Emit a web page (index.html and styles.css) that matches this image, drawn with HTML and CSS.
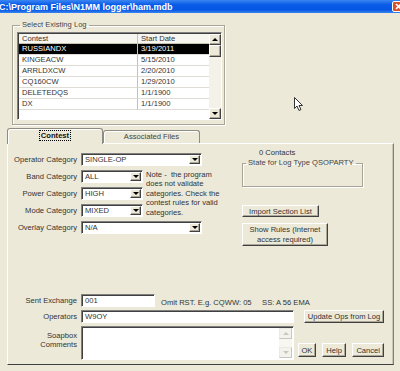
FILE: index.html
```html
<!DOCTYPE html>
<html>
  <head>
    <meta charset="UTF-8" />
    <link rel="stylesheet" href="styles.css">
  </head>
  <body>
    <div class="titlebar">
      <span class="title">C:\Program Files\N1MM logger\ham.mdb</span>
      <span class="close-btn">
        <svg width="7" height="7" viewBox="0 0 7 7">
          <path d="M1 1 L6 6 M6 1 L1 6" stroke="#fff" stroke-width="1.6" />
        </svg>
      </span>
    </div>

    <div class="window-body">
      <fieldset class="group log-group">
        <legend>Select Existing Log</legend>
        <div class="log-list">
          <div class="log-table">
            <div class="cell head first">Contest</div>
            <div class="cell head">Start Date</div>
            <div class="cell first selected">RUSSIANDX</div>
            <div class="cell selected">3/19/2011</div>
            <div class="cell first">KINGEACW</div>
            <div class="cell">5/15/2010</div>
            <div class="cell first">ARRLDXCW</div>
            <div class="cell">2/20/2010</div>
            <div class="cell first">CQ160CW</div>
            <div class="cell">1/29/2010</div>
            <div class="cell first">DELETEDQS</div>
            <div class="cell">1/1/1900</div>
            <div class="cell first">DX</div>
            <div class="cell">1/1/1900</div>
          </div>
          <div class="scrollbar">
            <span class="raised sb-btn arrow-up"></span>
            <span class="raised sb-thumb"></span>
            <span class="sb-track"></span>
            <span class="raised sb-btn arrow-down"></span>
          </div>
        </div>
      </fieldset>

      <div class="tabs">
        <div class="tab active"><span class="focus">Contest</span></div>
        <div class="tab">Associated Files</div>
      </div>

      <div class="tab-panel">
        <div class="panel-top">
          <div class="categories">
            <div class="label">Operator Category</div>
            <div class="select wide"><span class="value">SINGLE-OP</span><span class="raised drop arrow-down"></span></div>
            <div class="label">Band Category</div>
            <div class="select"><span class="value">ALL</span><span class="raised drop arrow-down"></span></div>
            <div class="note">Note -&nbsp; the program does not validate categories. Check the contest rules for valid categories.</div>
            <div class="label">Power Category</div>
            <div class="select"><span class="value">HIGH</span><span class="raised drop arrow-down"></span></div>
            <div class="label">Mode Category</div>
            <div class="select"><span class="value">MIXED</span><span class="raised drop arrow-down"></span></div>
            <div class="label">Overlay Category</div>
            <div class="select wide"><span class="value">N/A</span><span class="raised drop arrow-down"></span></div>
          </div>

          <div class="side">
            <div class="contacts">0 Contacts</div>
            <fieldset class="group state-group">
              <legend>State for Log Type QSOPARTY</legend>
            </fieldset>
            <div class="raised btn import-btn">Import Section List</div>
            <div class="raised btn rules-btn">Show Rules (Internet<br>access required)</div>
          </div>
        </div>

        <div class="exchange">
          <div class="label">Sent Exchange</div>
          <div class="sent-row">
            <div class="field sent-field">001</div>
            <span class="hint">Omit RST. E.g. CQWW: 05     SS: A 56 EMA</span>
          </div>
          <div class="label">Operators</div>
          <div class="field">W9OY</div>
          <div class="raised btn update-btn">Update Ops from Log</div>
          <div class="label soap-label">Soapbox<br>Comments</div>
          <div class="field comments">
            <span class="comments-text"></span>
            <span class="comments-sb">
              <span class="raised sb-btn arrow-up disabled"></span>
              <span class="sb-track"></span>
              <span class="raised sb-btn arrow-down disabled"></span>
            </span>
          </div>
          <div class="actions">
            <div class="raised btn ok-btn">OK</div>
            <div class="raised btn help-btn">Help</div>
            <div class="raised btn cancel-btn">Cancel</div>
          </div>
        </div>
      </div>
    </div>

    <!-- mouse pointer over the dialog -->
    <svg class="cursor" width="11" height="15" viewBox="0 0 11 15">
      <path d="M0.5 0.5 L0.5 11.5 L3 9 L5 13.5 L7 12.5 L5 8.5 L8.5 8.5 Z" fill="#fff" stroke="#333" stroke-width="1" />
    </svg>
  </body>
</html>
```

FILE: styles.css
```css
* {
  box-sizing: border-box;
}
body {
  margin: 0;
  width: 400px;
  height: 371px;
  overflow: hidden;
  position: relative;
  background: #ece9d8;
  font-family: "Liberation Sans", Arial, sans-serif;
  font-size: 7.6px;
  color: #333;
}
.titlebar {
  display: flex;
  align-items: center;
  justify-content: space-between;
  height: 13px;
  background: linear-gradient(#3c86f2, #0b5ce8 35%, #0556e3 75%, #3a84f0);
}
.title {
  color: white;
  font-weight: bold;
  font-size: 9px;
  white-space: nowrap;
  margin-left: -1px;
}
.close-btn {
  display: flex;
  align-items: center;
  justify-content: center;
  width: 13px;
  height: 11px;
  margin-right: -5px;
  background: #d9512f;
  border: 1px solid #fff;
  border-radius: 2px;
}
.window-body {
  padding: 0 6px 0 7px;
}

/* classic 3d controls */
.raised {
  background: #ece9d8;
  border: 1px solid;
  border-color: #fff #404040 #404040 #fff;
  box-shadow: inset -1px -1px #aca899;
}
.arrow-up,
.arrow-down {
  display: flex;
  align-items: center;
  justify-content: center;
}
.arrow-up::before,
.arrow-down::before {
  content: "";
  border-left: 3px solid transparent;
  border-right: 3px solid transparent;
}
.arrow-up::before {
  border-bottom: 3px solid #000;
}
.arrow-down::before {
  border-top: 3px solid #000;
}
.disabled::before {
  border-top-color: #c9c7ba;
  border-bottom-color: #c9c7ba;
}
.btn {
  display: flex;
  align-items: center;
  justify-content: center;
  text-align: center;
  white-space: nowrap;
  color: #333;
}
.group {
  margin: 0;
  border: 1px solid #a8a598;
  box-shadow: 1px 1px 0 #fff, inset 1px 1px 0 #fff;
}
.group legend {
  padding: 0 2px;
  margin-left: 3px;
  line-height: 10px;
  color: #444;
}

/* log list */
.log-group {
  width: 213px;
  margin: 7px 0 0 5px;
  padding: 2px 2px 4px 4px;
}
.log-list {
  display: flex;
  height: 88px;
  background: #fff;
  border: 1px solid;
  border-color: #808080 #fff #fff #808080;
  box-shadow: inset 1px 1px #404040;
  padding: 1px 0 0 1px;
}
.log-table {
  flex: 1;
  display: grid;
  grid-template-columns: 119px 1fr;
  grid-template-rows: 10px;
  grid-auto-rows: 11px;
  align-content: start;
}
.cell {
  padding-left: 3px;
  line-height: 10px;
  border-bottom: 1px solid #dedcd4;
  white-space: nowrap;
}
.cell.first {
  border-right: 1px solid #c5c2b2;
}
.cell.head {
  line-height: 9px;
  background: #f6f5ef;
  border-bottom-color: #c5c2b2;
}
.cell.selected {
  background: #000;
  color: #fff;
}
.scrollbar {
  width: 12px;
  display: flex;
  flex-direction: column;
  background: #f3f1e8;
}
.sb-btn {
  height: 11px;
}
.sb-thumb {
  height: 12px;
}
.sb-track {
  flex: 1;
}

/* tabs */
.tabs {
  display: flex;
  align-items: flex-end;
  height: 16px;
  margin-top: 2px;
}
.tab {
  width: 97px;
  height: 13px;
  border: 1px solid #8f8d80;
  border-bottom: none;
  border-radius: 3px 3px 0 0;
  background: #ece9d8;
  box-shadow: inset 1px 1px #fff;
  text-align: center;
  line-height: 12px;
  color: #444;
}
.tab.active {
  position: relative;
  z-index: 1;
  width: 96px;
  height: 16px;
  margin-bottom: -1px;
  line-height: 14px;
}
.focus {
  outline: 1px dotted #000;
  padding: 0 1px;
  font-weight: bold;
  color: #111;
}
.tab-panel {
  display: flex;
  flex-direction: column;
  height: 222px;
  border: 1px solid;
  border-color: #fff #808080 #404040 #fff;
  box-shadow: inset -1px 0 #c9c6b6;
  padding: 4px 8px 4px 0;
}

/* contest tab */
.panel-top {
  display: flex;
  gap: 15px;
}
.categories {
  display: grid;
  grid-template-columns: 69px 62px 80px;
  grid-template-rows: repeat(5, 13px);
  column-gap: 4px;
  row-gap: 4px;
  padding-top: 5px;
  align-items: center;
}
.label {
  text-align: right;
  white-space: nowrap;
}
.select,
.field {
  height: 13px;
  background: #fff;
  border: 1px solid;
  border-color: #808080 #fff #fff #808080;
  box-shadow: inset 1px 1px #404040;
}
.select {
  display: flex;
  padding: 1px;
}
.select .value {
  flex: 1;
  padding-left: 2px;
  line-height: 10px;
}
.select .drop {
  width: 11px;
}
.select.wide {
  grid-column: 2 / 4;
  width: 121px;
}
.note {
  grid-column: 3;
  grid-row: 2 / 5;
  align-self: start;
  line-height: 9.4px;
  margin-left: -1px;
}
.side {
  width: 121px;
  display: flex;
  flex-direction: column;
  align-items: flex-start;
}
.contacts {
  padding-left: 17px;
  line-height: 9px;
}
.state-group {
  width: 121px;
  height: 29px;
  margin-top: 1px;
  padding: 0;
}
.import-btn {
  margin-top: 18px;
  width: 77px;
  height: 12px;
}
.rules-btn {
  margin-top: 6px;
  width: 86px;
  height: 23px;
  line-height: 9.5px;
}

/* exchange area */
.exchange {
  margin-top: auto;
  display: grid;
  grid-template-columns: 69px 213px 86px;
  grid-template-rows: 13px 13px 34px;
  column-gap: 4px;
  row-gap: 3px;
  align-items: center;
}
.field {
  padding-left: 3px;
  line-height: 11px;
}
.sent-row {
  grid-column: 2 / 4;
  display: flex;
  align-items: center;
}
.sent-field {
  width: 74px;
}
.hint {
  margin-left: 6px;
  padding-top: 3px;
  white-space: pre;
}
.update-btn {
  justify-self: end;
  width: 80px;
  height: 13px;
}
.soap-label {
  align-self: start;
  padding-top: 5px;
  line-height: 9px;
}
.comments {
  display: flex;
  height: 34px;
  padding: 1px 1px 1px 3px;
}
.comments-text {
  flex: 1;
}
.comments-sb {
  width: 13px;
  display: flex;
  flex-direction: column;
  background: #f7f6f1;
}
.comments-sb .sb-btn {
  height: 11px;
  border-color: #eceae0 #c9c7ba #c9c7ba #eceae0;
  box-shadow: none;
  background: #f3f2ec;
}
.actions {
  display: flex;
  justify-content: flex-end;
  align-items: flex-end;
  align-self: end;
  gap: 6px;
  padding-bottom: 3px;
}
.actions .btn {
  height: 14px;
}
.ok-btn {
  width: 18px;
}
.help-btn {
  width: 25px;
}
.cancel-btn {
  width: 32px;
}
.cursor {
  position: absolute;
  left: 294px;
  top: 97px;
}
```
